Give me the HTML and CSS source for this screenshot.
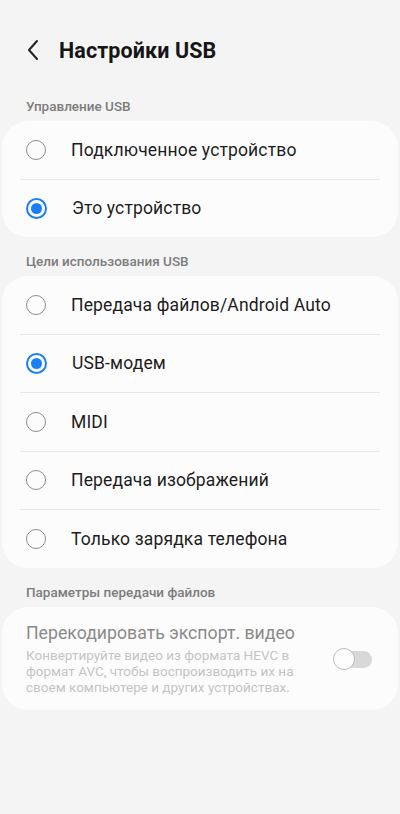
FILE: index.html
```html
<!DOCTYPE html>
<html lang="ru">
<head>
    <meta charset="UTF-8">
    <meta name="viewport" content="width=device-width, initial-scale=1.0">
    <title>Настройки USB</title>
    <link rel="stylesheet" href="styles.css">
</head>
<body>
    <header class="top-bar">
        <svg class="back-icon" width="14" height="22" viewBox="0 0 14 22">
            <path d="M11 2 L3 11 L11 20" fill="none" stroke="#222" stroke-width="2" stroke-linecap="round" stroke-linejoin="round"/>
        </svg>
        <h1>Настройки USB</h1>
    </header>

    <div class="section-label">Управление USB</div>
    <div class="card">
        <div class="row"><span class="radio"></span><span class="row-text">Подключенное устройство</span></div>
        <div class="divider"></div>
        <div class="row"><span class="radio checked"></span><span class="row-text">Это устройство</span></div>
    </div>

    <div class="section-label">Цели использования USB</div>
    <div class="card">
        <div class="row"><span class="radio"></span><span class="row-text">Передача файлов/Android Auto</span></div>
        <div class="divider"></div>
        <div class="row"><span class="radio checked"></span><span class="row-text">USB-модем</span></div>
        <div class="divider"></div>
        <div class="row"><span class="radio"></span><span class="row-text">MIDI</span></div>
        <div class="divider"></div>
        <div class="row"><span class="radio"></span><span class="row-text">Передача изображений</span></div>
        <div class="divider"></div>
        <div class="row"><span class="radio"></span><span class="row-text">Только зарядка телефона</span></div>
    </div>

    <div class="section-label">Параметры передачи файлов</div>
    <div class="card option-card">
        <div class="option-text">
            <div class="option-title">Перекодировать экспорт. видео</div>
            <div class="option-desc">Конвертируйте видео из формата HEVC в формат AVC, чтобы воспроизводить их на своем компьютере и других устройствах.</div>
        </div>
        <div class="toggle"><span class="knob"></span></div>
    </div>
</body>
</html>
```

FILE: styles.css
```css
body {
    font-family: Roboto, "Noto Sans", Arial, sans-serif;
    margin: 0;
    width: 400px;
    height: 814px;
    background-color: #f4f4f4;
    color: #1a1a1a;
}

.top-bar {
    display: flex;
    align-items: center;
    height: 40px;
    padding: 30px 0 0 26px;
}

.back-icon {
    margin-right: 19px;
}

h1 {
    margin: 0;
    font-size: 21.5px;
    letter-spacing: 0.1px;
    font-weight: 700;
    color: #161616;
}

.section-label {
    padding: 28px 26px 6px;
    font-size: 13.5px;
    line-height: 17px;
    font-weight: 500;
    color: #7c7c7c;
}

.card + .section-label {
    padding-top: 16px;
}

.card {
    margin: 0 2px;
    background-color: #fcfcfc;
    border-radius: 26px;
}

.row {
    display: flex;
    align-items: center;
    height: 57.5px;
    padding-left: 24px;
}

.row-text {
    font-size: 17.5px;
    letter-spacing: 0.15px;
    margin-left: 25px;
    color: #1c1c1c;
}

.divider {
    height: 1px;
    margin: 0 18px;
    background-color: #e6e6e6;
}

.radio {
    width: 18px;
    height: 18px;
    border: 1.5px solid #8d8d8d;
    border-radius: 50%;
    box-sizing: content-box;
    position: relative;
}

.radio.checked {
    border: 2px solid #1a7ff2;
    width: 17px;
    height: 17px;
}

.radio.checked::after {
    content: "";
    position: absolute;
    left: 3px;
    top: 3px;
    width: 11px;
    height: 11px;
    border-radius: 50%;
    background-color: #1a7ff2;
}

.option-card {
    display: flex;
    align-items: center;
    padding: 15px 26px 15px 24px;
}

.option-text {
    flex: 1;
}

.option-title {
    font-size: 17.7px;
    line-height: 22px;
    color: #8a8a8a;
    margin-bottom: 3px;
}

.option-desc {
    font-size: 13.5px;
    line-height: 16px;
    color: #c4c4c4;
    padding-right: 30px;
}

.toggle {
    position: relative;
    width: 38px;
    height: 17px;
    border-radius: 9px;
    background-color: #d8d8d8;
    margin-top: 2px;
}

.knob {
    position: absolute;
    left: -1px;
    top: -3px;
    width: 20px;
    height: 20px;
    border-radius: 50%;
    background-color: #fdfdfd;
    border: 1.5px solid #bdbdbd;
}
```
